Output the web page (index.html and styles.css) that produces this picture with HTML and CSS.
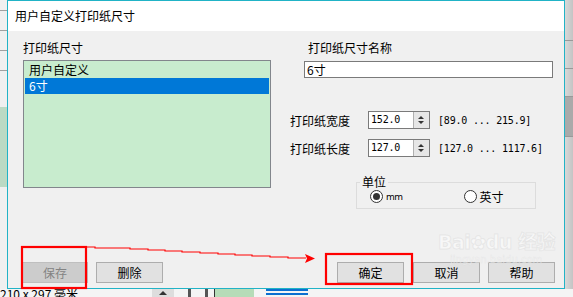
FILE: index.html
```html
<!DOCTYPE html>
<html lang="zh">

<head>
    <meta charset="UTF-8">
    <title>用户自定义打印纸尺寸</title>
    <link rel="stylesheet" href="styles.css">
</head>

<body>
    <div id="desk">
        <div class="side side-left">
            <div class="rule"></div>
            <div class="rule"></div>
            <div class="rule"></div>
            <div class="rule"></div>
            <div class="green"></div>
        </div>

        <div class="dialog">
            <div class="titlebar">用户自定义打印纸尺寸</div>
            <div class="dlg-body">
                <div class="cols">
                    <div class="col-left">
                        <div class="label">打印纸尺寸</div>
                        <div class="listbox">
                            <div class="item">用户自定义</div>
                            <div class="item selected">6寸</div>
                        </div>
                    </div>
                    <div class="col-right">
                        <div class="label name-label">打印纸尺寸名称</div>
                        <div class="textbox">6寸</div>

                        <div class="field-row first">
                            <span class="field-label">打印纸宽度</span>
                            <div class="spin">
                                <span class="spin-value">152.0</span>
                                <span class="spin-btn"><i class="up"></i><i class="down"></i></span>
                            </div>
                            <span class="range">[89.0 ... 215.9]</span>
                        </div>
                        <div class="field-row">
                            <span class="field-label">打印纸长度</span>
                            <div class="spin">
                                <span class="spin-value">127.0</span>
                                <span class="spin-btn"><i class="up"></i><i class="down"></i></span>
                            </div>
                            <span class="range">[127.0 ... 1117.6]</span>
                        </div>

                        <fieldset class="unit">
                            <legend>单位</legend>
                            <label class="radio checked"><span class="dot"></span><span class="mm">mm</span></label>
                            <label class="radio"><span class="dot"></span>英寸</label>
                        </fieldset>
                    </div>
                </div>

                <div class="buttons">
                    <div class="btn-group">
                        <button class="btn" disabled>保存</button>
                        <button class="btn">删除</button>
                    </div>
                    <div class="btn-group">
                        <button class="btn">确定</button>
                        <button class="btn">取消</button>
                        <button class="btn">帮助</button>
                    </div>
                </div>
            </div>
        </div>

        <div class="side side-right">
            <div class="band"></div>
            <div class="band"></div>
            <div class="band dark"></div>
            <div class="band"></div>
        </div>
    </div>

    <div class="statusbar">
        <span class="paper">210 x 297 毫米</span>
        <span class="caret"></span>
        <span class="tick"></span>
        <span class="tick"></span>
        <span class="tool green-tool"></span>
        <span class="blue-lines"></span>
    </div>

    <!-- watermark -->
    <div class="watermark">
        <div class="wm-logo">Bai<span class="paw">&#10047;</span>du 经验</div>
        <div class="wm-url">jingyan.baidu.com</div>
    </div>

    <!-- red marks drawn over the screenshot -->
    <svg class="marks" width="573" height="297" viewBox="0 0 573 297">
        <rect x="22" y="247" width="64" height="41" fill="none" stroke="#f00" stroke-width="2.2" />
        <rect x="326" y="254" width="86" height="30" fill="none" stroke="#f00" stroke-width="2.2" />
        <polyline points="87,247 95,247 95,248 130,248 130,249 148,249 148,250 165,250 165,251 182,251 182,252 200,252 200,253 218,253 218,254 235,254 235,255 252,255 252,256 270,256 270,257 288,257 288,258 306,258"
            fill="none" stroke="#f00" stroke-width="1.2" />
        <polygon points="305,254 315,258.5 305,263 307,258.5" fill="#f00" />
    </svg>
</body>

</html>
```

FILE: styles.css
```css
*,
*:before,
*:after {
    box-sizing: border-box;
}

body {
    margin: 0;
    width: 573px;
    height: 297px;
    overflow: hidden;
    background-color: #f0f0f0;
    font-family: "Noto Sans CJK SC", "Microsoft YaHei", sans-serif;
    font-size: 12px;
    color: #000;
    position: relative;
}

#desk {
    display: flex;
    height: 289px;
}

/* bits of the main window peeking out */
.side-left {
    width: 7px;
    background-color: #f0f0f0;
    padding-top: 10px;
}

.side-left .rule {
    height: 1px;
    background-color: #a0a0a0;
    margin-bottom: 19px;
}

.side-left .green {
    margin-top: 36px;
    height: 80px;
    background-color: #bcdac4;
}

.side-right {
    width: 8px;
    background: linear-gradient(to right, #d8d8d8, #c4c4c4);
    padding-top: 40px;
}

.side-right .band {
    height: 28px;
    border-top: 1px solid #999;
}

.side-right .band.dark {
    height: 40px;
    background-color: #aaa;
}

/* dialog */
.dialog {
    width: 559px;
    height: 289px;
    border: 1px solid #21b3c6;
    display: flex;
    flex-direction: column;
    background-color: #f0f0f0;
}

.titlebar {
    height: 30px;
    background-color: #fff;
    line-height: 30px;
    padding-left: 7px;
    font-size: 12px;
}

.dlg-body {
    flex: 1;
    display: flex;
    flex-direction: column;
    padding: 9px 0 5px 0;
}

.cols {
    display: flex;
}

.label {
    line-height: 16px;
    height: 16px;
}

.col-left {
    margin-left: 15px;
    width: 248px;
}

.listbox {
    margin-top: 4px;
    height: 128px;
    border: 1px solid #82868c;
    background-color: #c8ecce;
    padding: 1px;
}

.item {
    height: 16px;
    line-height: 16px;
    padding-left: 4px;
}

.item.selected {
    background-color: #0078d7;
    color: #fff;
}

.col-right {
    margin-left: 19px;
    width: 264px;
}

.name-label {
    margin-left: 18px;
}

.textbox {
    margin-top: 5px;
    margin-left: 14px;
    width: 249px;
    height: 17px;
    border: 1px solid #7a7a7a;
    background-color: #fff;
    line-height: 15px;
    padding-left: 2px;
}

.field-row {
    display: flex;
    align-items: center;
    height: 18px;
    margin-top: 10px;
}

.field-row.first {
    margin-top: 33px;
}

.field-label {
    width: 78px;
}

.spin {
    display: flex;
    width: 62px;
    height: 18px;
    border: 1px solid #7a7a7a;
    background-color: #fff;
}

.spin-value {
    flex: 1;
    font-family: "DejaVu Sans Mono", monospace;
    font-size: 10px;
    letter-spacing: -0.2px;
    line-height: 16px;
    padding-left: 2px;
}

.spin-btn {
    width: 16px;
    border-left: 1px solid #b0b0b0;
    background-color: #e6e6e6;
    display: flex;
    flex-direction: column;
    justify-content: center;
    align-items: center;
    gap: 2px;
}

.spin-btn i {
    width: 0;
    height: 0;
    border-left: 3px solid transparent;
    border-right: 3px solid transparent;
}

.spin-btn .up {
    border-bottom: 3px solid #333;
}

.spin-btn .down {
    border-top: 3px solid #333;
}

.range {
    margin-left: 8px;
    font-family: "DejaVu Sans Mono", monospace;
    font-size: 10px;
    letter-spacing: -0.2px;
}

.unit {
    margin: 18px 0 0 66px;
    width: 180px;
    height: 34px;
    border: 1px solid #dcdcdc;
    padding: 0 0 0 13px;
    display: flex;
    align-items: center;
}

.unit legend {
    padding: 0 2px;
    margin-left: -10px;
    line-height: 14px;
}

.radio {
    display: flex;
    align-items: center;
    margin-top: -4px;
}

.radio + .radio {
    margin-left: 61px;
}

.radio .dot {
    width: 13px;
    height: 13px;
    border-radius: 50%;
    border: 1px solid #333;
    background-color: #fff;
    margin-right: 3px;
    position: relative;
}

.radio.checked .dot:after {
    content: "";
    position: absolute;
    left: 2px;
    top: 2px;
    width: 7px;
    height: 7px;
    border-radius: 50%;
    background-color: #333;
}

.mm {
    font-family: "DejaVu Sans", sans-serif;
    font-size: 9px;
    letter-spacing: -0.5px;
}

.buttons {
    margin-top: auto;
    display: flex;
    justify-content: space-between;
    padding: 0 9px 0 14px;
}

.btn-group {
    display: flex;
    gap: 8px;
}

.btn {
    width: 67px;
    height: 21px;
    border: 1px solid #adadad;
    background-color: #e1e1e1;
    font-family: "Noto Sans CJK SC", sans-serif;
    font-size: 12px;
    padding: 0;
    color: #000;
}

.btn:disabled {
    width: 66px;
    background-color: #cccccc;
    border-color: #bfbfbf;
    color: #838383;
}

.btn-group + .btn-group .btn:first-child {
    margin-right: 1px;
}

/* strip of the main window below the dialog */
.statusbar {
    height: 8px;
    background-color: #f4f4f4;
    position: relative;
    overflow: hidden;
    display: flex;
    align-items: flex-start;
}

.paper {
    font-size: 12px;
    line-height: 12px;
    margin-top: -1px;
    width: 152px;
}

.caret {
    width: 22px;
    height: 8px;
    background-color: #ddd;
    position: relative;
}

.caret:after {
    content: "";
    position: absolute;
    left: 7px;
    top: 2px;
    border-left: 4px solid transparent;
    border-right: 4px solid transparent;
    border-bottom: 4px solid #333;
}

.tick {
    width: 3px;
    height: 8px;
    background-color: #555;
    margin-left: 14px;
}

.green-tool {
    width: 40px;
    height: 8px;
    margin-left: 6px;
    background-color: #b6dcb8;
    border-left: 1px solid #333;
}

.blue-lines {
    width: 42px;
    height: 6px;
    margin-left: 12px;
    border-top: 2px solid #0c6fd0;
    border-bottom: 2px solid #0c6fd0;
}

.watermark {
    position: absolute;
    left: 438px;
    top: 230px;
    color: rgba(255, 255, 255, 0.5);
    -webkit-text-stroke: 1px rgba(200, 200, 200, 0.3);
    font-family: "DejaVu Sans", "Noto Sans CJK SC", sans-serif;
    pointer-events: none;
}

.wm-logo {
    font-size: 19px;
    font-weight: bold;
    line-height: 24px;
    letter-spacing: -0.5px;
    white-space: nowrap;
}

.wm-url {
    font-size: 10px;
    line-height: 12px;
    margin-left: 12px;
    -webkit-text-stroke: 0.5px rgba(200, 200, 200, 0.3);
}

.marks {
    position: absolute;
    left: 0;
    top: 0;
}
```
